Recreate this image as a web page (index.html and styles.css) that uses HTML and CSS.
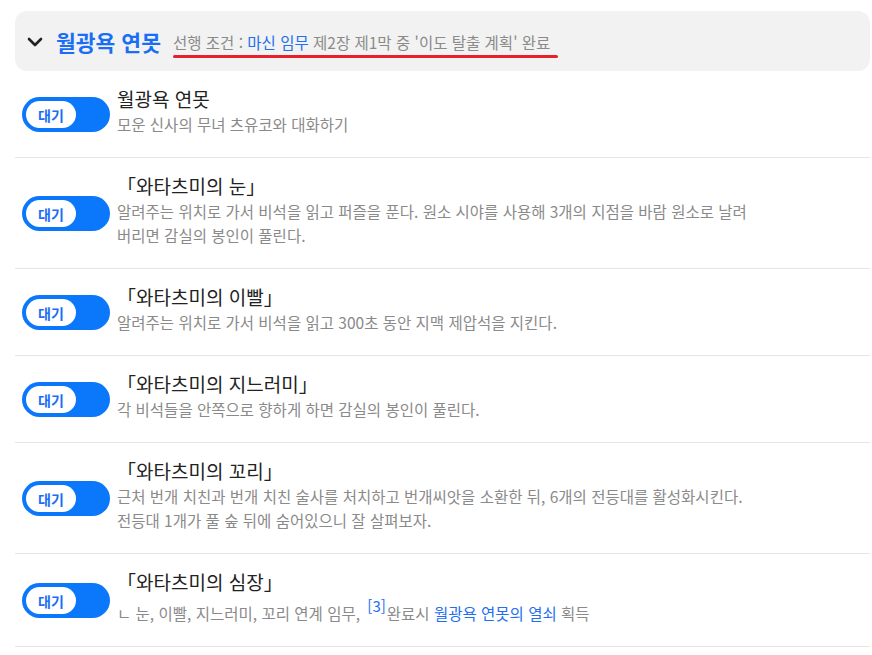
FILE: index.html
```html
<!DOCTYPE html>
<html lang="ko">
<head>
<meta charset="utf-8">
<link rel="stylesheet" href="styles.css">
</head>
<body>
<div class="wrap">
  <div class="head">
    <svg class="chev" width="16" height="10" viewBox="0 0 16 10"><path d="M2 2 L8 8 L14 2" fill="none" stroke="#222" stroke-width="2.6" stroke-linecap="round" stroke-linejoin="round"/></svg>
    <span class="head-title">월광욕 연못</span>
    <span class="cond">선행 조건 : <span class="link">마신 임무</span> 제2장 제1막 중 '이도 탈출 계획' 완료</span>
  </div>

  <div class="row">
    <div class="toggle"><span class="knob">대기</span></div>
    <div class="txt">
      <div class="title">월광욕 연못</div>
      <div class="desc">모운 신사의 무녀 츠유코와 대화하기</div>
    </div>
  </div>

  <div class="row">
    <div class="toggle"><span class="knob">대기</span></div>
    <div class="txt">
      <div class="title">「와타츠미의 눈」</div>
      <div class="desc">알려주는 위치로 가서 비석을 읽고 퍼즐을 푼다. 원소 시야를 사용해 3개의 지점을 바람 원소로 날려<br>버리면 감실의 봉인이 풀린다.</div>
    </div>
  </div>

  <div class="row">
    <div class="toggle"><span class="knob">대기</span></div>
    <div class="txt">
      <div class="title">「와타츠미의 이빨」</div>
      <div class="desc">알려주는 위치로 가서 비석을 읽고 300초 동안 지맥 제압석을 지킨다.</div>
    </div>
  </div>

  <div class="row">
    <div class="toggle"><span class="knob">대기</span></div>
    <div class="txt">
      <div class="title">「와타츠미의 지느러미」</div>
      <div class="desc">각 비석들을 안쪽으로 향하게 하면 감실의 봉인이 풀린다.</div>
    </div>
  </div>

  <div class="row">
    <div class="toggle"><span class="knob">대기</span></div>
    <div class="txt">
      <div class="title">「와타츠미의 꼬리」</div>
      <div class="desc">근처 번개 치친과 번개 치친 술사를 처치하고 번개씨앗을 소환한 뒤, 6개의 전등대를 활성화시킨다.<br>전등대 1개가 풀 숲 뒤에 숨어있으니 잘 살펴보자.</div>
    </div>
  </div>

  <div class="row last">
    <div class="toggle"><span class="knob">대기</span></div>
    <div class="txt">
      <div class="title">「와타츠미의 심장」</div>
      <div class="desc">ㄴ 눈, 이빨, 지느러미, 꼬리 연계 임무, <sup class="ref">[3]</sup>완료시 <span class="link">월광욕 연못의 열쇠</span> 획득</div>
    </div>
  </div>
</div>
</body>
</html>
```

FILE: styles.css
```css
html, body {
  margin: 0;
  padding: 0;
  background: #fff;
}
body {
  font-family: "Noto Sans CJK KR", "Noto Sans", sans-serif;
  color: #222;
}
.wrap {
  padding: 11px 2px 0 15px;
}
.head {
  position: relative;
  height: 60px;
  background: #f2f2f2;
  border-radius: 12px;
  display: flex;
  align-items: center;
  padding-left: 12px;
  box-sizing: border-box;
}
.chev {
  flex: none;
  margin-right: 13px;
  margin-top: 1px;
}
.head-title {
  font-size: 21.5px;
  font-weight: 700;
  color: #1a6ef5;
  margin-right: 12px;
}
.cond {
  position: relative;
  font-size: 15.5px;
  color: #8a8a8a;
  margin-top: 2px;
}
.cond::after {
  content: "";
  position: absolute;
  left: 0;
  right: -8px;
  bottom: -5px;
  height: 3px;
  border-radius: 2px;
  background: #e8202a;
}
.link {
  color: #1f6ff0;
}
.row {
  display: flex;
  align-items: center;
  padding: 15px 0 21px 7px;
  border-bottom: 1px solid #e6e6e6;
}
.toggle {
  flex: none;
  width: 88px;
  height: 35px;
  border-radius: 18px;
  background: #0b78fb;
  box-sizing: border-box;
  padding: 4px;
  margin-right: 7px;
  margin-top: 7px;
  display: flex;
  align-items: center;
}
.knob {
  width: 50px;
  height: 27px;
  border-radius: 14px;
  background: #fff;
  color: #1a6ef5;
  font-size: 14px;
  font-weight: 700;
  display: flex;
  align-items: center;
  justify-content: center;
  line-height: 1;
}
.title {
  font-size: 19px;
  line-height: 26px;
  color: #222;
}
.desc {
  font-size: 15.5px;
  line-height: 24px;
  color: #8a8a8a;
}
.last .desc {
  padding-top: 6px;
}
.ref {
  color: #1f6ff0;
  font-size: 15px;
  vertical-align: 8px;
  line-height: 0;
  margin-left: 3px;
  margin-right: 1px;
}
```
